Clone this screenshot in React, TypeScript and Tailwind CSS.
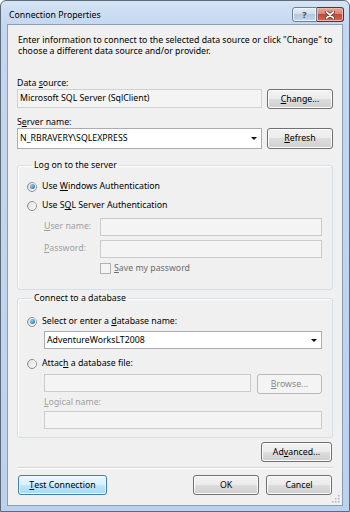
import type { ReactNode } from 'react';
import clsx from 'clsx';

// Win7 "Connection Properties" dialog (Aero Basic frame), shown at ~74% scale.

const FONT = "font-['Segoe_UI','Noto_Sans','Open_Sans',sans-serif]";

function U({ children }: { children: ReactNode }) {
  return <span className="underline decoration-1 underline-offset-[1px]">{children}</span>;
}

function Button({
  children,
  className,
  hot = false,
  disabled = false,
}: {
  children: ReactNode;
  className?: string;
  hot?: boolean;
  disabled?: boolean;
}) {
  return (
    <div
      className={clsx(
        'flex h-[20px] shrink-0 items-center justify-center rounded-[3px] border leading-[11px]',
        disabled
          ? 'border-[#b5b9bc] bg-[#f4f4f4] text-[#8a8a8a]'
          : hot
            ? 'border-[#3c7fb1] bg-[linear-gradient(to_bottom,#eaf6fd_0%,#d9f0fc_50%,#bee6fd_50%,#a7d9f5_100%)] shadow-[inset_0_0_0_1px_#f4fbff]'
            : 'border-[#707070] bg-[linear-gradient(to_bottom,#f2f2f2_0%,#ebebeb_50%,#dddddd_50%,#cfcfcf_100%)] shadow-[inset_0_0_0_1px_#fcfcfc]',
        className,
      )}
    >
      {children}
    </div>
  );
}

function Radio({ checked = false }: { checked?: boolean }) {
  return (
    <span className="flex h-[10px] w-[10px] shrink-0 items-center justify-center rounded-full border border-[#8e8f8f] bg-[linear-gradient(135deg,#d0d0d0,#fdfdfd)]">
      <span className="flex h-[7px] w-[7px] items-center justify-center rounded-full bg-[linear-gradient(135deg,#e4e4e4,#f8f8f8)]">
        {checked && (
          <span className="h-[5px] w-[5px] rounded-full bg-[radial-gradient(circle_at_35%_35%,#8fd0f5,#1c5b9a)]" />
        )}
      </span>
    </span>
  );
}

function TextBox({ className, disabled = false, children }: { className?: string; disabled?: boolean; children?: ReactNode }) {
  return (
    <div
      className={clsx(
        'flex h-[18px] items-center border px-[2px] leading-[11px]',
        disabled ? 'border-[#c9cbcd] bg-[#f4f4f4]' : 'border-[#abadb3] bg-white',
        className,
      )}
    >
      {children}
    </div>
  );
}

function Combo({ value, className }: { value: string; className?: string }) {
  return (
    <div className={clsx('flex items-center border border-[#abadb3] bg-white pl-[2px] pr-[4px] leading-[11px]', className)}>
      <span className="flex-1">{value}</span>
      <svg width="6" height="3" viewBox="0 0 6 3" aria-hidden>
        <path d="M0 0h6L3 3z" fill="#111" />
      </svg>
    </div>
  );
}

function Group({ title, children, className }: { title: string; children: ReactNode; className?: string }) {
  return (
    <fieldset className={clsx('rounded-[3px] border border-[#d5dfe5] shadow-[inset_1px_1px_0_#fff]', className)}>
      <legend className="ml-[5px] px-[2px] leading-[11px]">{title}</legend>
      {children}
    </fieldset>
  );
}

export default function App() {
  return (
    <div
      className={clsx(
        FONT,
        'flex h-[512px] w-[350px] flex-col rounded-t-[6px] border border-[#5d6b7c] bg-[linear-gradient(to_bottom,#d5e4f5_0px,#c3d7ef_24px,#bcd2ec_100%)] px-[6px] pb-[5px] text-[8.75px] text-black',
      )}
    >
      {/* title bar */}
      <div className="flex h-[23px] shrink-0 items-start">
        <span className="ml-[2px] mt-[9px] leading-[11px]">Connection Properties</span>
        <div className="ml-auto mr-[-1px] mt-[6px] flex">
          <div className="flex h-[15px] w-[25px] items-center justify-center rounded-l-[3px] border border-[#6d7f96] bg-[linear-gradient(to_bottom,#e4edf7_0%,#cfdcec_50%,#b4c7de_50%,#c7d7ea_100%)] shadow-[inset_0_0_0_1px_#eef4fb]">
            <span className="text-[9px] font-bold leading-none text-[#3c4a5c]">?</span>
          </div>
          <div className="flex h-[15px] w-[27px] items-center justify-center rounded-r-[3px] border border-l-0 border-[#6e2a22] bg-[linear-gradient(to_bottom,#e9a99c_0%,#d6806f_50%,#c24a36_50%,#d36a4f_100%)] shadow-[inset_0_0_0_1px_#f0b8ab]">
            <svg width="10" height="8" viewBox="0 0 10 8" aria-hidden>
              <path d="M1.5 1l7 6M8.5 1l-7 6" stroke="#5a1c14" strokeWidth="3.2" strokeLinecap="round" />
              <path d="M1.5 1l7 6M8.5 1l-7 6" stroke="#fff" strokeWidth="1.8" strokeLinecap="round" />
            </svg>
          </div>
        </div>
      </div>

      {/* client area */}
      <div className="relative flex flex-1 flex-col border border-[#8a9db5] bg-[#f0f0f0] px-[9px] pt-[10px]">
        <p className="pl-[1px] leading-[11px]">
          Enter information to connect to the selected data source or click "Change" to choose a different data source
          and/or provider.
        </p>

        <div className="mt-[21px] leading-[11px]">
          Data <U>s</U>ource:
        </div>
        <div className="flex items-start gap-[5px]">
          <TextBox disabled className="h-[19px] flex-1 border-[#cfd1d3]">
            Microsoft SQL Server (SqlClient)
          </TextBox>
          <Button className="w-[66px]">
            <U>C</U>hange...
          </Button>
        </div>

        <div className="mt-[8px] leading-[11px]">
          S<U>e</U>rver name:
        </div>
        <div className="flex items-start gap-[5px]">
          <Combo value="N_RBRAVERY\SQLEXPRESS" className="h-[21px] flex-1" />
          <Button className="h-[21px] w-[66px]">
            <U>R</U>efresh
          </Button>
        </div>

        <Group title="Log on to the server" className="mt-[11px] pb-[15px] pl-[9px] pr-[10px]">
          <div className="mt-[10px] flex items-center gap-[5px] leading-[11px]">
            <Radio checked />
            <span>
              Use <U>W</U>indows Authentication
            </span>
          </div>
          <div className="mt-[8px] flex items-center gap-[5px] leading-[11px]">
            <Radio />
            <span>
              Use S<U>Q</U>L Server Authentication
            </span>
          </div>
          <div className="mt-[7px] flex items-center pl-[17px]">
            <span className="w-[56px] text-[#a0a0a0]">
              <U>U</U>ser name:
            </span>
            <TextBox disabled className="flex-1" />
          </div>
          <div className="mt-[4px] flex items-center pl-[17px]">
            <span className="w-[56px] text-[#a0a0a0]">
              <U>P</U>assword:
            </span>
            <TextBox disabled className="flex-1" />
          </div>
          <div className="mt-[5px] flex items-center gap-[3px] pl-[73px] leading-[11px] text-[#6d6d6d]">
            <span className="h-[11px] w-[11px] border border-[#b1b1b1] bg-[#f4f4f4]" />
            <span>
              <U>S</U>ave my password
            </span>
          </div>
        </Group>

        <Group title="Connect to a database" className="mt-[3px] pb-[8px] pl-[9px] pr-[10px]">
          <div className="mt-[12px] flex items-center gap-[5px] leading-[11px]">
            <Radio checked />
            <span>
              Select or enter a <U>d</U>atabase name:
            </span>
          </div>
          <div className="mt-[4px] pl-[17px]">
            <Combo value="AdventureWorksLT2008" className="h-[18px]" />
          </div>
          <div className="mt-[9px] flex items-center gap-[5px] leading-[11px]">
            <Radio />
            <span>
              Attac<U>h</U> a database file:
            </span>
          </div>
          <div className="mt-[5px] flex items-start gap-[6px] pl-[17px]">
            <TextBox disabled className="flex-1" />
            <Button disabled className="w-[65px]">
              <U>B</U>rowse...
            </Button>
          </div>
          <div className="mt-[3px] pl-[17px] leading-[11px] text-[#a0a0a0]">
            <U>L</U>ogical name:
          </div>
          <div className="mt-[3px] pl-[17px]">
            <TextBox disabled />
          </div>
        </Group>

        <Button className="mr-[1px] mt-[4px] w-[71px] self-end">
          Ad<U>v</U>anced...
        </Button>

        <div className="mt-[5px] h-[2px] border-t border-[#d5d5d5] bg-white" />

        <div className="mt-[6px] flex items-start">
          <Button hot className="ml-[1px] w-[89px]">
            <U>T</U>est Connection
          </Button>
          <Button className="ml-auto w-[66px]">OK</Button>
          <Button className="ml-[7px] mr-[1px] w-[66px]">Cancel</Button>
        </div>

        {/* size grip */}
        <svg className="absolute bottom-[2px] right-[2px]" width="10" height="10" viewBox="0 0 10 10" aria-hidden>
          {[
            [8, 2],
            [5, 5],
            [8, 5],
            [2, 8],
            [5, 8],
            [8, 8],
          ].map(([x, y]) => (
            <rect key={`${x}-${y}`} x={x} y={y} width="1.5" height="1.5" fill="#a7b4c4" />
          ))}
        </svg>
      </div>
    </div>
  );
}
